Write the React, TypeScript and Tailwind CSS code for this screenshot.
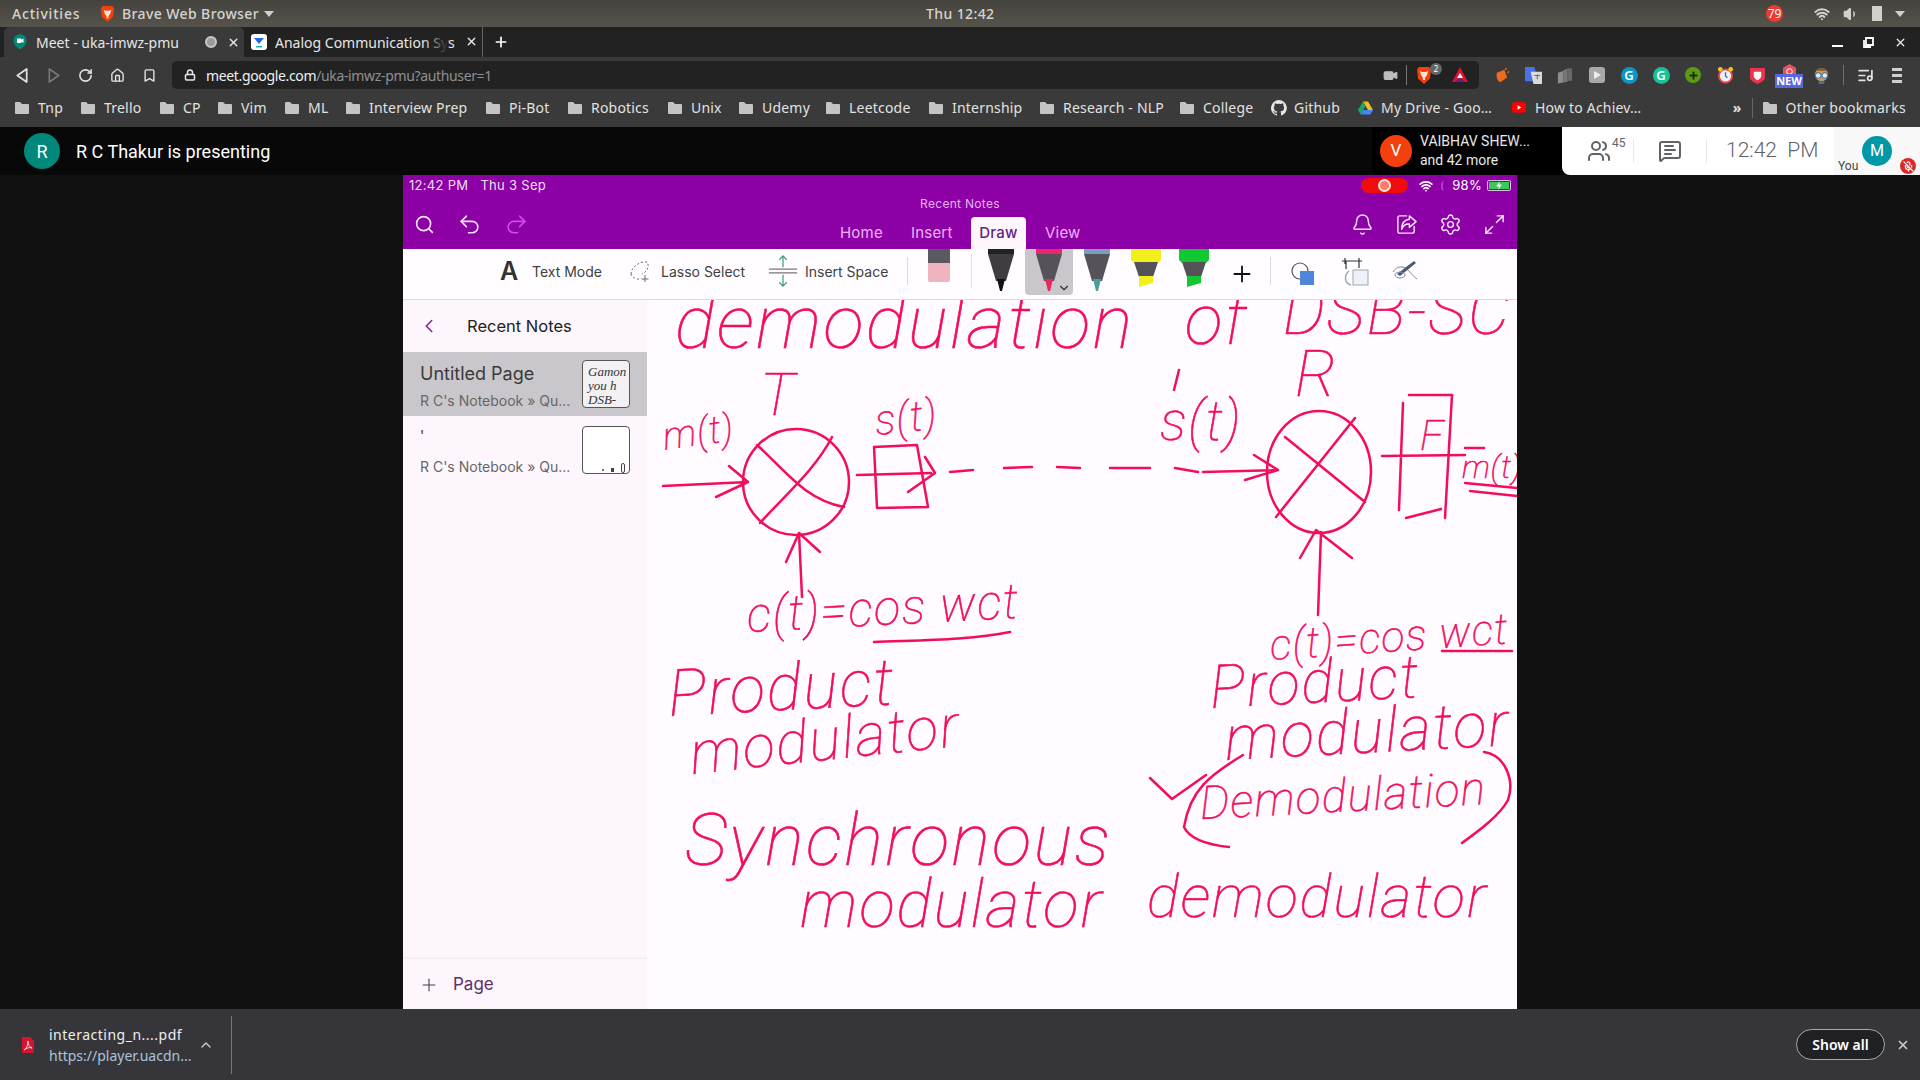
import React from "react";
import {
  Bell, ChevronDown, ChevronLeft, ChevronUp, Home, Lock, Maximize2, MessageSquareText, MicOff, Plus, RotateCw, Search, Settings, Undo2, Redo2, Users, Video, Volume1, Wifi, X, Bookmark, ListMusic,
} from "lucide-react";

const bookmarks = [
  { t: "Tnp", w: "w-[66px]" },
  { t: "Trello", w: "w-[79px]" },
  { t: "CP", w: "w-[58px]" },
  { t: "Vim", w: "w-[67px]" },
  { t: "ML", w: "w-[61px]" },
  { t: "Interview Prep", w: "w-[140px]" },
  { t: "Pi-Bot", w: "w-[82px]" },
  { t: "Robotics", w: "w-[100px]" },
  { t: "Unix", w: "w-[71px]" },
  { t: "Udemy", w: "w-[87px]" },
  { t: "Leetcode", w: "w-[103px]" },
  { t: "Internship", w: "w-[111px]" },
  { t: "Research - NLP", w: "w-[140px]" },
  { t: "College", w: "w-[91px]" },
];

function FolderIcon() {
  return (
    <svg viewBox="0 0 14 13" className="w-[14px] h-[13px] shrink-0">
      <path d="M0 2a1 1 0 0 1 1-1h4l2 2h6a1 1 0 0 1 1 1v8a1 1 0 0 1-1 1H1a1 1 0 0 1-1-1z" fill="#c4c4c4" />
    </svg>
  );
}

function Brave({ className }: { className: string }) {
  return (
    <svg viewBox="0 0 16 18" className={className}>
      <path d="M3 1h10l2 2.500-1 9L8 18l-6-5.500-1-9z" fill="#f1420b" />
      <path d="M4 5l2 1h4l2-1-1 4-2 3v2H7v-2L5 9z" fill="#fff" opacity="0.85" />
    </svg>
  );
}

function Pen({ body, tip, band }: { body: string; tip: string; band: string }) {
  return (
    <svg viewBox="0 0 28 42" className="w-[28px] h-[42px]">
      <path d="M1 0h26v5H1z" fill={band} />
      <path d="M1 5h26l-8 27H9z" fill={body} />
      <path d="M10 30h8l-3 12h-2z" fill={tip} />
    </svg>
  );
}

function Marker({ color }: { color: string }) {
  return (
    <svg viewBox="0 0 32 38" className="w-[32px] h-[38px]">
      <path d="M1 0h30v11l-3 3H4l-3-3z" fill={color} />
      <path d="M4 13h24l-5 15H9z" fill="#55525a" />
      <path d="M9 27h14v7l-14 4z" fill={color} />
    </svg>
  );
}

function Ext({ children }: { children: React.ReactNode }) {
  return <div className="w-[32px] h-[20px] flex items-center justify-center relative">{children}</div>;
}

function InkWord({ className, children }: { className: string; children: React.ReactNode }) {
  return (
    <span className={"absolute whitespace-nowrap italic font-thin leading-none tracking-[0.03em] origin-left font-['Roboto',sans-serif] text-[#f20d5e] [-webkit-text-stroke:0.6px_#f20d5e] " + className}>
      {children}
    </span>
  );
}

function Diagram() {
  return (
    <svg viewBox="647 300 870 709" className="absolute left-0 top-0 w-[870px] h-[709px]" fill="none" stroke="#f20d5e" strokeWidth="2.500" strokeLinecap="round" strokeLinejoin="round">
      <ellipse cx="796" cy="482" rx="53" ry="53" />
      <path d="M757 445C785 470 805 500 844 507M832 437C815 470 785 495 760 523" />
      <path d="M663 486L748 482M729 466L748 482L716 497" />
      <path d="M802 597L799 533M786 562L799 533L820 552" />
      <path d="M874 447L917 445L928 507L877 508Z" />
      <path d="M857 475L931 473M925 457L935 473L908 492" />
      <path d="M950 472L973 470M1004 468L1032 467M1057 467L1080 468M1110 468L1150 468M1175 468L1198 472" />
      <path d="M1203 472L1278 470M1254 455L1278 470L1245 480" />
      <ellipse cx="1319" cy="472" rx="52" ry="61" />
      <path d="M1285 437L1365 502M1355 418L1276 517" />
      <path d="M1318 615L1321 532M1300 558L1316 530L1352 558" />
      <path d="M1409 395L1452 395L1445 518M1403 403L1399 510M1406 518L1441 509M1382 456L1465 455M1465 448L1484 448" />
      <path d="M874 642C920 640 970 640 1010 632M1442 651L1512 651M1465 483L1517 488M1470 491L1517 496" />
      <path d="M1243 755C1210 775 1190 790 1184 827C1190 840 1210 845 1229 847M1150 778L1172 799L1206 775M1484 752C1505 755 1515 780 1508 800C1500 815 1480 830 1462 843" />
      <path d="M1179 370L1174 390" />
    </svg>
  );
}

export default function App() {
  return (
    <div className="flex flex-col h-screen w-[1920px] overflow-hidden bg-[#111111] font-['Noto_Sans',sans-serif]">
      {/* Desktop bar */}
      <div className="h-[27px] shrink-0 relative flex items-center bg-gradient-to-b from-[#45433e] to-[#56534c] text-[14px] font-medium text-[#d5d5d0] tracking-[0.4px]">
        <span className="ml-[12px] w-[88px] tracking-[0.8px]">Activities</span>
        <Brave className="w-[15px] h-[17px]" />
        <span className="ml-[7px]">Brave Web Browser</span>
        <svg viewBox="0 0 10 6" className="w-[10px] h-[6px] ml-[5px]"><path d="M0 0h10L5 6z" fill="#d0d0cc" /></svg>
        <span className="absolute left-[926px] top-[3px]">Thu 12:42</span>
        <div className="ml-auto flex items-center">
          <span className="w-[17px] h-[17px] mr-[31px] rounded-full bg-[#ec3a30] text-white text-[12px] font-normal tracking-normal flex items-center justify-center">79</span>
          <Wifi className="w-[16px] h-[16px] text-[#d0d0cc] mr-[13px]" strokeWidth={3} />
          <Volume1 className="w-[16px] h-[16px] text-[#d0d0cc] fill-[#d0d0cc] mr-[13px]" />
          <div className="w-[10px] h-[15px] bg-[#d0d0cc] mr-[13px]" />
          <svg viewBox="0 0 10 6" className="w-[10px] h-[6px] mr-[15px]"><path d="M0 0h10L5 6z" fill="#d0d0cc" /></svg>
        </div>
      </div>

      {/* Tab strip */}
      <div className="h-[30px] shrink-0 bg-[#222222] flex items-end text-[14px] text-[#e6e6e6]">
        <div className="ml-[4px] w-[240px] h-[30px] rounded-t-[6px] bg-[#3a3a3a] flex items-center pl-[9px]">
          <svg viewBox="0 0 16 18" className="w-[14px] h-[16px]">
            <path d="M8 0a7.500 7.500 0 0 1 7.500 7.500c0 4-3 7-7.500 10C3.500 14.500.5 11.500.5 7.500A7.500 7.500 0 0 1 8 0z" fill="#00897b" />
            <path d="M4.500 5h5v1.500L12 5v5l-2.500-1.500V10h-5z" fill="#fff" />
          </svg>
          <span className="ml-[9px] w-[169px]">Meet - uka-imwz-pmu</span>
          <span className="w-[12px] h-[12px] rounded-full bg-[#9b9b9b] border-2 border-[#c8c8c8]" />
          <X className="w-[13px] h-[13px] ml-[10px] text-[#e6e6e6]" strokeWidth={2.500} />
        </div>
        <div className="w-[239px] h-[30px] flex items-center pl-[7px] border-r border-[#666666] relative">
          <div className="w-[16px] h-[16px] rounded-[3px] bg-white flex items-center justify-center">
            <svg viewBox="0 0 12 12" className="w-[12px] h-[12px]"><path d="M1 2h10L6 8z" fill="#1e66f5" /><path d="M3 10h6v1.500H3z" fill="#17b8a6" /></svg>
          </div>
          <span className="ml-[8px] w-[185px] overflow-hidden whitespace-nowrap">Analog Communication Sys</span>
          <span className="absolute left-[180px] top-0 h-[30px] w-[24px] bg-gradient-to-r from-transparent to-[#222222]" />
          <X className="w-[13px] h-[13px] absolute left-[221px] top-[8px]" strokeWidth={2.500} />
        </div>
        <Plus className="w-[16px] h-[16px] ml-[10px] mb-[7px] text-white" strokeWidth={2.500} />
        <div className="ml-auto flex items-center h-[30px] text-[#e6e6e6]">
          <div className="w-[11px] h-[2px] bg-white mt-[8px] mr-[20px]" />
          <svg viewBox="0 0 11 11" className="w-[11px] h-[11px] mr-[20px]"><path d="M3 1h7v7H3zM1 3v7h7" fill="none" stroke="#fff" strokeWidth="1.800" /></svg>
          <X className="w-[13px] h-[13px] mr-[13px]" strokeWidth={2.500} />
        </div>
      </div>

      {/* Toolbar */}
      <div className="h-[36px] shrink-0 bg-[#3a3a3a] flex items-center">
        <div className="w-[172px] flex items-center text-[#e3e3e3]">
          <svg viewBox="0 0 12 16" className="w-[12px] h-[15px] ml-[16px]"><path d="M11 1L1 8l10 7z" fill="none" stroke="#e3e3e3" strokeWidth="1.800" strokeLinejoin="round" /></svg>
          <svg viewBox="0 0 12 16" className="w-[12px] h-[15px] ml-[20px]"><path d="M1 1l10 7-10 7z" fill="none" stroke="#777777" strokeWidth="1.800" strokeLinejoin="round" /></svg>
          <RotateCw className="w-[15px] h-[15px] ml-[18px]" strokeWidth={2.500} />
          <Home className="w-[15px] h-[15px] ml-[17px]" strokeWidth={2.200} />
          <Bookmark className="w-[15px] h-[15px] ml-[17px]" strokeWidth={2.200} />
        </div>
        <div className="w-[1307px] h-[28px] rounded-[5px] bg-[#222222] flex items-center pl-[12px] text-[14px]">
          <Lock className="w-[12px] h-[12px] text-[#e6e6e6]" strokeWidth={3} />
          <span className="ml-[10px] text-[#f0f0f0] tracking-[-0.35px]">meet.google.com</span>
          <span className="text-[#8f8f8f] tracking-[-0.35px]">/uka-imwz-pmu?authuser=1</span>
          <Video className="ml-auto w-[15px] h-[15px] text-[#bdbdbd] fill-[#bdbdbd]" />
          <div className="w-px h-[20px] bg-[#777777] ml-[8px] mr-[9px]" />
          <div className="relative w-[18px] h-[18px]">
            <Brave className="w-[16px] h-[18px]" />
            <span className="absolute -right-[8px] -top-[3px] w-[12px] h-[12px] rounded-full bg-[#666666] text-[8px] leading-[12px] text-center text-white">2</span>
          </div>
          <svg viewBox="0 0 18 18" className="w-[18px] h-[18px] ml-[17px] mr-[10px]"><path d="M9 1l8 15H1z" fill="#e0122a" /><path d="M4 16l5-5 5 5z" fill="#6f1d78" /><path d="M9 7l3 5H6z" fill="#fff" /></svg>
        </div>
        <div className="flex items-center ml-[6px]">
          <Ext><svg viewBox="0 0 18 18" className="w-[17px] h-[17px]"><path d="M4 6l8-3 3 8-7 5c-3 0-5-6-4-10z" fill="#ed6c1b" /><path d="M14 1l-1 2M17 5l-2 1" stroke="#ed6c1b" strokeWidth="1.500" /></svg></Ext>
          <Ext>
            <svg viewBox="0 0 18 18" className="w-[17px] h-[19px]"><path d="M0 0h10l4 15H0z" fill="#4a72e8" /><path d="M6 5h12v13H9z" fill="#dadada" /><path d="M10 9h6M13 8v5" stroke="#666" strokeWidth="1" /></svg>
          </Ext>
          <Ext><svg viewBox="0 0 18 18" className="w-[16px] h-[17px]"><path d="M1 6l6-2v13l-6 1z" fill="#8c8c8c" /><path d="M7 3l5-2v15l-5 1z" fill="#777" /><path d="M12 1h5v14h-5z" fill="#686868" /></svg></Ext>
          <Ext><div className="w-[16px] h-[16px] rounded-[3px] bg-[#a8a8a8] flex items-center justify-center"><svg viewBox="0 0 10 10" className="w-[10px] h-[10px]"><path d="M2 1l7 4-7 4z" fill="#eee" /></svg></div></Ext>
          <Ext><div className="w-[17px] h-[17px] rounded-full bg-[#0b97c4] flex items-center justify-center text-white text-[13px] font-semibold leading-none">G</div></Ext>
          <Ext><div className="w-[17px] h-[17px] rounded-full bg-[#15c39a] flex items-center justify-center text-white text-[13px] font-semibold leading-none">G</div></Ext>
          <Ext><div className="w-[16px] h-[16px] rounded-full bg-[#5a9a14] flex items-center justify-center"><Plus className="w-[11px] h-[11px] text-[#1d2b10]" strokeWidth={4} /></div></Ext>
          <Ext><svg viewBox="0 0 18 18" className="w-[17px] h-[18px]"><circle cx="9" cy="10" r="7" fill="#f1f1f1" stroke="#e8434c" strokeWidth="2" /><path d="M9 6v4l2 2" stroke="#2b7bb9" strokeWidth="1.500" fill="none" /><circle cx="3.500" cy="3" r="2.500" fill="#f5c518" /><circle cx="14.500" cy="3" r="2.500" fill="#f5c518" /></svg></Ext>
          <Ext><svg viewBox="0 0 16 18" className="w-[15px] h-[17px]"><path d="M0 1h16v10c0 3-4 5-8 7-4-2-8-4-8-7z" fill="#e8344e" /><path d="M4 5h8v5c0 1-2 3-4 4-2-1-4-3-4-4z" fill="#f5f5f5" /></svg></Ext>
          <Ext>
            <svg viewBox="0 0 16 16" className="w-[15px] h-[15px] -mt-[8px]"><path d="M1 4l7-4 7 4v9H1z" fill="#e05560" /><circle cx="8" cy="8" r="3" fill="none" stroke="#fff" strokeWidth="1" /></svg>
            <span className="absolute left-[2px] top-[9px] w-[28px] h-[14px] bg-[#5a66e0] text-white text-[11px] font-bold leading-[14px] text-center tracking-normal">NEW</span>
          </Ext>
          <Ext><svg viewBox="0 0 18 18" className="w-[17px] h-[17px]"><circle cx="9" cy="8" r="7" fill="#c9995c" /><path d="M3 4c3-4 9-4 12 0z" fill="#7a5a2e" /><circle cx="5.500" cy="9" r="3" fill="#dfeaf5" stroke="#2b5ea8" /><circle cx="12.500" cy="9" r="3" fill="#dfeaf5" stroke="#2b5ea8" /><path d="M6 15h6v3H6z" fill="#3a77a8" /></svg></Ext>
          <div className="w-px h-[20px] bg-[#6f6f6f] ml-[6px] mr-[13px]" />
          <ListMusic className="w-[17px] h-[17px] text-[#e3e3e3]" strokeWidth={2.400} />
          <div className="ml-[18px] w-[10px] flex flex-col gap-[3px]"><div className="h-[3px] bg-[#d0d0d0]" /><div className="h-[3px] bg-[#d0d0d0]" /><div className="h-[3px] bg-[#d0d0d0]" /></div>
        </div>
      </div>

      {/* Bookmarks */}
      <div className="h-[34px] shrink-0 bg-[#3a3a3a] flex items-center pl-[15px] pb-[5px] text-[14px] text-[#e2e2e2] tracking-[0.2px]">
        {bookmarks.map((b) => (
          <div key={b.t} className={"flex items-center gap-[9px] shrink-0 " + b.w}>
            <FolderIcon />
            <span className="whitespace-nowrap">{b.t}</span>
          </div>
        ))}
        <div className="w-[87px] flex items-center gap-[7px] shrink-0">
          <svg viewBox="0 0 16 16" className="w-[16px] h-[16px]" fill="#e6e6e6"><path d="M8 0a8 8 0 0 0-2.500 15.600c.4.100.5-.2.500-.4v-1.400c-2.200.5-2.700-1-2.700-1-.4-.9-.9-1.200-.9-1.200-.7-.5.1-.5.1-.5.8.100 1.200.8 1.200.8.700 1.200 1.900.9 2.300.7.100-.5.300-.9.500-1.100-1.800-.2-3.600-.9-3.600-4 0-.9.300-1.600.8-2.100-.1-.2-.4-1 .1-2.100 0 0 .7-.2 2.200.8a7.600 7.600 0 0 1 4 0c1.500-1 2.200-.8 2.200-.8.400 1.100.2 1.900.1 2.100.5.600.8 1.300.8 2.100 0 3.100-1.900 3.700-3.700 3.900.3.300.6.800.6 1.500v2.200c0 .2.100.5.600.4A8 8 0 0 0 8 0z" /></svg>
          <span>Github</span>
        </div>
        <div className="w-[154px] flex items-center gap-[8px] shrink-0">
          <svg viewBox="0 0 16 14" className="w-[15px] h-[14px]"><path d="M5.300 0h5.400l5.300 9h-5.400z" fill="#f5bc1c" /><path d="M5.300 0L0 9l2.700 5 5.300-9z" fill="#1fa463" /><path d="M2.700 14h10.600l2.700-5H5.400z" fill="#4285f4" /></svg>
          <span>My Drive - Goo…</span>
        </div>
        <div className="flex items-center gap-[9px] shrink-0">
          <svg viewBox="0 0 15 11" className="w-[14px] h-[11px]"><rect width="15" height="11" rx="2.500" fill="#f00" /><path d="M6 3l4 2.500L6 8z" fill="#fff" /></svg>
          <span>How to Achiev…</span>
        </div>
        <div className="ml-auto flex items-center">
          <span className="mr-[10px] text-[14px] font-bold">»</span>
          <div className="w-px h-[20px] bg-[#666666] mr-[10px]" />
          <FolderIcon />
          <span className="ml-[9px] mr-[14px] tracking-[0.3px]">Other bookmarks</span>
        </div>
      </div>

      {/* Meet */}
      <div className="flex-1 min-h-0 flex flex-col bg-[#111111]">
        <div className="h-[48px] shrink-0 flex items-center bg-[#080808] font-['Roboto',sans-serif]">
          <div className="ml-[24px] w-[36px] h-[36px] rounded-full bg-[#00897b] text-white text-[18px] flex items-center justify-center">R</div>
          <span className="ml-[16px] text-[18px] text-white">R C Thakur is presenting</span>
          <div className="ml-auto w-[190px] h-[48px] bg-black rounded-bl-[8px] flex items-center pl-[8px] text-[#e8e8e8]">
            <div className="w-[32px] h-[32px] rounded-full bg-[#f4400e] text-white text-[17px] flex items-center justify-center">V</div>
            <div className="ml-[8px] flex flex-col text-[14px] leading-[19px]">
              <span>VAIBHAV SHEW...</span>
              <span>and 42 more</span>
            </div>
          </div>
          <div className="w-[358px] h-[48px] bg-white rounded-bl-[8px] flex items-center text-[#5f6368]">
            <div className="w-[72px] h-[24px] border-r border-[#e8e8e8] flex items-start pl-[25px] relative">
              <Users className="w-[24px] h-[24px]" strokeWidth={2} />
              <span className="text-[12px] leading-none ml-[1px] -mt-[2px]">45</span>
            </div>
            <div className="w-[73px] h-[24px] border-r border-[#e8e8e8] flex items-center justify-center">
              <MessageSquareText className="w-[24px] h-[24px]" strokeWidth={2} />
            </div>
            <span className="ml-[19px] text-[21px] font-light whitespace-pre text-[#5f6368]">12:42  PM</span>
            <div className="ml-auto w-[86px] h-[48px] bg-[#f8f8f8] relative">
              <span className="absolute left-[4px] top-[30px] text-[12px] text-[#444444]">You</span>
              <div className="absolute left-[28px] top-[9px] w-[30px] h-[30px] rounded-full bg-[#0097a7] text-white text-[16px] flex items-center justify-center">M</div>
              <div className="absolute left-[66px] top-[31px] w-[16px] h-[16px] rounded-full bg-[#db2a2a] flex items-center justify-center">
                <MicOff className="w-[11px] h-[11px] text-white" strokeWidth={2.500} />
              </div>
            </div>
          </div>
        </div>

        <div className="flex-1 min-h-0 flex justify-center">
          <div className="w-[1114px] flex flex-col font-['Inter',sans-serif]">
            {/* purple bar */}
            <div className="h-[74px] shrink-0 bg-[#8c00a6] flex flex-col">
              <div className="h-[22px] flex items-center px-[6px] text-[13px] text-[#f3dff7] tracking-[0.3px]">
                <span>12:42 PM</span>
                <span className="ml-[12px]">Thu 3 Sep</span>
                <div className="ml-auto w-[47px] h-[15px] rounded-full bg-[#ee0c0c] flex items-center justify-center">
                  <span className="w-[13px] h-[13px] rounded-full border-2 border-[#ffe4dc] bg-[#ff7a6a]" />
                </div>
                <Wifi className="w-[14px] h-[14px] ml-[11px] text-white" strokeWidth={3} />
                <span className="w-[7px] h-[10px] rounded-full border-l-2 border-[#b13bd0] ml-[8px]" />
                <span className="ml-[4px] text-white">98%</span>
                <div className="ml-[5px] w-[24px] h-[11px] rounded-[2px] border border-[#d8c0e0] p-px flex relative">
                  <div className="flex-1 bg-[#3fc75a]" />
                  <svg viewBox="0 0 8 10" className="absolute left-[7px] top-0 w-[8px] h-[9px]"><path d="M5 0L1 6h3l-1 4 4-6H4z" fill="#fff" /></svg>
                </div>
              </div>
              <div className="h-[16px] text-center text-[12px] leading-[16px] text-[#eab0f0] tracking-[0.3px]">Recent Notes</div>
              <div className="flex-1 flex items-end relative">
                <div className="w-[437px] h-full flex items-center pl-[11px] pb-[12px] gap-[22px]">
                  <Search className="w-[21px] h-[21px] text-[#f6e6fa]" strokeWidth={1.800} />
                  <Undo2 className="w-[25px] h-[25px] text-[#f6e6fa]" strokeWidth={1.500} />
                  <Redo2 className="w-[25px] h-[25px] text-[#d24ce8]" strokeWidth={1.500} />
                </div>
                <div className="flex items-end text-[15px] text-[#f0b4f8] h-[32px] tracking-[0.2px]">
                  <span className="w-[71px] h-[32px] leading-[32px]">Home</span>
                  <span className="w-[60px] h-[32px] leading-[32px]">Insert</span>
                  <span className="w-[55px] h-[32px] rounded-t-[4px] bg-[#fdf7fd] text-[#6a1a85] font-medium text-center leading-[32px]">Draw</span>
                  <span className="ml-[19px] h-[32px] leading-[32px]">View</span>
                </div>
                <div className="ml-auto h-full flex items-center gap-[21px] pr-[11px] pb-[12px] text-[#f6e6fa]">
                  <Bell className="w-[23px] h-[23px]" strokeWidth={1.500} />
                  <svg viewBox="0 0 24 24" className="w-[23px] h-[23px]" fill="none" stroke="#f6e6fa" strokeWidth="1.500" strokeLinecap="round" strokeLinejoin="round">
                    <path d="M12 3H5a2 2 0 0 0-2 2v14a2 2 0 0 0 2 2h13a2 2 0 0 0 2-2v-5" />
                    <path d="M15 3l7 6-7 6v-3.500C11 11 8.500 13 7 17c0-6 3-10 8-10.500z" />
                  </svg>
                  <Settings className="w-[23px] h-[23px]" strokeWidth={1.500} />
                  <Maximize2 className="w-[23px] h-[23px]" strokeWidth={1.500} />
                </div>
              </div>
            </div>

            {/* tool row */}
            <div className="h-[51px] shrink-0 bg-[#fffdff] border-b border-[#dddddd] flex items-start text-[14px] text-[#3f3f3f]">
              <div className="flex items-center h-[44px] ml-[97px]">
                <span className="w-[32px] text-[25px] font-semibold text-[#333333] leading-none">A</span>
                <span className="w-[96px]">Text Mode</span>
              </div>
              <div className="flex items-center h-[44px]">
                <svg viewBox="0 0 24 24" className="w-[24px] h-[24px] mr-[9px]" fill="none" stroke="#6b6b6b" strokeDasharray="2 2"><path d="M3 15C3 8 12 2 19 3c3 4 0 10-5 12M3 15c1 4 7 6 10 5" /><path d="M17 16v7M13.500 20h7" strokeDasharray="none" /></svg>
                <span className="w-[90px]">Lasso Select</span>
              </div>
              <div className="flex items-center h-[44px] ml-[17px]">
                <svg viewBox="0 0 30 34" className="w-[30px] h-[32px] mr-[7px]" fill="none" stroke="#3b9c8c" strokeWidth="1.300"><path d="M15 1v12M11 5l4-4 4 4M15 33V21M11 29l4 4 4-4" /><path d="M0 15h30M0 19h30" stroke="#777777" /></svg>
                <span className="w-[84px]">Insert Space</span>
              </div>
              <div className="w-px h-[28px] bg-[#d9d9d9] mt-[8px] ml-[18px]" />
              <div className="w-[22px] h-[33px] ml-[20px] flex flex-col rounded-b-[2px] overflow-hidden">
                <div className="h-[14px] bg-[#5a5860]" />
                <div className="flex-1 bg-[#efb4c0]" />
              </div>
              <div className="w-px h-[34px] bg-[#e4e4e4] mt-[5px] ml-[21px]" />
              <div className="ml-[15px]"><Pen band="#222222" body="#3f3d42" tip="#111111" /></div>
              <div className="ml-[10px] w-[48px] h-[46px] rounded-b-[4px] bg-[#c9c7cb] flex justify-center relative">
                <Pen band="#f0246e" body="#55525a" tip="#f0245e" />
                <ChevronDown className="absolute right-[2px] bottom-0 w-[14px] h-[14px] text-[#333333]" strokeWidth={2} />
              </div>
              <div className="ml-[10px]"><Pen band="#7aa0c0" body="#55525a" tip="#4f9c9c" /></div>
              <div className="ml-[19px]"><Marker color="#f2f01c" /></div>
              <div className="ml-[16px]"><Marker color="#12c832" /></div>
              <Plus className="w-[26px] h-[26px] ml-[19px] mt-[12px] text-[#111111]" strokeWidth={1.700} />
              <div className="w-px h-[28px] bg-[#d9d9d9] mt-[8px] ml-[15px]" />
              <svg viewBox="0 0 26 26" className="w-[26px] h-[26px] ml-[19px] mt-[12px]"><circle cx="10" cy="10" r="8" fill="none" stroke="#555" strokeWidth="1.200" /><rect x="10" y="10" width="14" height="14" fill="#4f86d9" /></svg>
              <svg viewBox="0 0 30 32" className="w-[30px] h-[32px] ml-[24px] mt-[9px]" fill="none"><path d="M2 3h20M5 0v6M19 0v6M6 3v8M19 3v7" stroke="#333" strokeWidth="1.200" /><rect x="13" y="12" width="15" height="15" fill="#eef2f6" stroke="#9aa7b6" /><path d="M9 13C4 17 4 25 11 27" stroke="#9aa7b6" strokeWidth="1.500" /></svg>
              <svg viewBox="0 0 26 24" className="w-[26px] h-[24px] ml-[22px] mt-[10px]" fill="none"><path d="M1 13C5 7 11 6 16 11c3 3 5 6 9 9" stroke="#888" /><path d="M5 15L22 2l2 2L8 17z" fill="#4a5a70" /><ellipse cx="8" cy="16" rx="5" ry="3" stroke="#7a8ba0" /></svg>
            </div>

            <div className="flex-1 min-h-0 flex">
              {/* sidebar */}
              <div className="w-[244px] shrink-0 flex flex-col bg-[#fdf7fd]">
                <div className="h-[52px] shrink-0 flex items-center pl-[15px]">
                  <ChevronLeft className="w-[22px] h-[22px] text-[#7a2a90]" strokeWidth={1.700} />
                  <span className="ml-[27px] text-[16.500px] text-[#222222]">Recent Notes</span>
                </div>
                <div className="h-[64px] shrink-0 bg-[#c9c7cb] flex items-center pl-[17px]">
                  <div className="w-[162px] pt-[3px]">
                    <div className="text-[18px] leading-[24px] text-[#3a3a3a]">Untitled Page</div>
                    <div className="text-[14px] leading-[18px] mt-[6px] text-[#666666] whitespace-nowrap">R C's Notebook » Qu...</div>
                  </div>
                  <div className="w-[48px] h-[48px] rounded-[4px] border border-[#555555] bg-[#f3f1f3] overflow-hidden text-[#333333] font-['Liberation_Serif',serif] italic text-[13px] leading-[14px] pl-[5px] pt-[4px] whitespace-nowrap">
                    <div>Gamon</div><div>you h</div><div>DSB-</div>
                  </div>
                </div>
                <div className="h-[64px] shrink-0 flex items-start pl-[17px]">
                  <div className="w-[162px] pt-[11px]">
                    <div className="text-[14px] leading-[18px] text-[#333333]">'</div>
                    <div className="text-[14px] leading-[18px] mt-[13px] text-[#666666] whitespace-nowrap">R C's Notebook » Qu...</div>
                  </div>
                  <div className="w-[48px] h-[48px] mt-[10px] rounded-[4px] border border-[#555555] bg-white flex items-end justify-end pr-[4px] gap-[7px]">
                    <span className="w-[2px] h-[2px] rounded-full bg-[#444444] mb-[2px]" />
                    <span className="w-[3px] h-[4px] bg-[#444444] mb-[1px]" />
                    <span className="w-[4px] h-[10px] rounded-full border border-[#444444]" />
                  </div>
                </div>
                <div className="flex-1" />
                <div className="h-[52px] shrink-0 border-t-2 border-[#f5eff5] flex items-center pl-[16px] pt-[2px]">
                  <Plus className="w-[20px] h-[20px] text-[#4a3a50]" strokeWidth={1.300} />
                  <span className="ml-[14px] text-[17px] text-[#5e2e66]">Page</span>
                </div>
              </div>

              {/* canvas */}
              <div className="flex-1 relative overflow-hidden bg-[#fffbff]">
                <Diagram />
                <InkWord className="left-[28px] -top-[15px] text-[75px]">demodulation</InkWord>
                <InkWord className="left-[538px] -top-[15px] text-[70px]">of</InkWord>
                <InkWord className="left-[636px] -top-[21px] text-[66px]">DSB-SC</InkWord>
                <InkWord className="left-[113px] top-[65px] text-[60px]">T</InkWord>
                <InkWord className="left-[16px] top-[118px] text-[38px] -rotate-[8deg]">m(t)</InkWord>
                <InkWord className="left-[228px] top-[100px] text-[42px] -rotate-[6deg]">s(t)</InkWord>
                <InkWord className="left-[513px] top-[94px] text-[55px]">s(t)</InkWord>
                <InkWord className="left-[648px] top-[42px] text-[65px]">R</InkWord>
                <InkWord className="left-[773px] top-[115px] text-[42px]">F</InkWord>
                <InkWord className="left-[815px] top-[151px] text-[32px]">m(t)</InkWord>
                <InkWord className="left-[100px] top-[291px] text-[49px] -rotate-[3deg]">c(t)=cos wct</InkWord>
                <InkWord className="left-[623px] top-[324px] text-[43px] -rotate-[4deg]">c(t)=cos wct</InkWord>
                <InkWord className="left-[21px] top-[362px] text-[65px] -rotate-[3deg]">Product</InkWord>
                <InkWord className="left-[43px] top-[424px] text-[59px] -rotate-[6deg]">modulator</InkWord>
                <InkWord className="left-[38px] top-[504px] text-[73px]">Synchronous</InkWord>
                <InkWord className="left-[153px] top-[572px] text-[66px]">modulator</InkWord>
                <InkWord className="left-[500px] top-[567px] text-[60px]">demodulator</InkWord>
                <InkWord className="left-[563px] top-[358px] text-[60px] -rotate-[3deg]">Product</InkWord>
                <InkWord className="left-[578px] top-[408px] text-[62px] -rotate-[3deg]">modulator</InkWord>
                <InkWord className="left-[553px] top-[480px] text-[46px] -rotate-[3deg]">Demodulation</InkWord>
              </div>
            </div>
          </div>
        </div>
      </div>

      {/* Download bar */}
      <div className="h-[71px] shrink-0 bg-[#36363a] flex items-center pl-[22px] pr-[10px] text-[14px]">
        <svg viewBox="0 0 12 16" className="w-[12px] h-[16px]"><path d="M0 0h8l4 4v12H0z" fill="#d3152f" /><path d="M2 13c3-2 4-5 4-9 0 4 2 6 4 7-3-1-5 0-8 2z" fill="none" stroke="#fff" strokeWidth="0.800" /></svg>
        <div className="ml-[15px] w-[143px] flex flex-col leading-[21px]">
          <span className="text-[#eeeeee] tracking-[0.5px]">interacting_n....pdf</span>
          <span className="text-[#a9c4de] whitespace-nowrap">https://player.uacdn...</span>
        </div>
        <ChevronUp className="w-[16px] h-[16px] text-[#cccccc] ml-[6px]" strokeWidth={2} />
        <div className="w-px h-[58px] bg-[#77777a] ml-[17px]" />
        <div className="ml-auto w-[89px] h-[31px] rounded-full border border-[#a8a8aa] bg-[#202124] flex items-center justify-center text-[14px] font-semibold text-white">Show all</div>
        <X className="w-[14px] h-[14px] ml-[11px] text-[#c8c8c8]" strokeWidth={3} />
      </div>
    </div>
  );
}
